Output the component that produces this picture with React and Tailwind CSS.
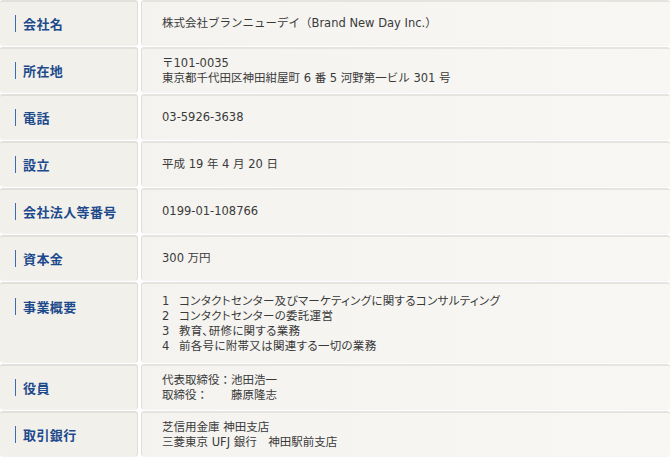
const rows = [
  { label: "会社名", lines: ["株式会社ブランニューデイ（Brand New Day Inc.）"] },
  { label: "所在地", lines: ["〒101-0035", "東京都千代田区神田紺屋町 6 番 5 河野第一ビル 301 号"] },
  { label: "電話", lines: ["03-5926-3638"] },
  { label: "設立", lines: ["平成 19 年 4 月 20 日"] },
  { label: "会社法人等番号", lines: ["0199-01-108766"] },
  { label: "資本金", lines: ["300 万円"] },
  { label: "事業概要", list: [
    "コンタクトセンター及びマーケティングに関するコンサルティング",
    "コンタクトセンターの委託運営",
    "教育､研修に関する業務",
    "前各号に附帯又は関連する一切の業務",
  ] },
  { label: "役員", officers: [["代表取締役：", "池田浩一"], ["取締役：", "藤原隆志"]] },
  { label: "取引銀行", lines: ["芝信用金庫 神田支店", "三菱東京 UFJ 銀行　神田駅前支店"] },
];

function Value({ row }) {
  if (row.list) {
    return (
      <div className="flex flex-col">
        {row.list.map((t, i) => (
          <div key={i} className="flex">
            <span className="w-[17px]">{i + 1}</span>
            <span className="[font-feature-settings:'palt'] tracking-[0.3px]">{t}</span>
          </div>
        ))}
      </div>
    );
  }
  if (row.officers) {
    return (
      <div className="grid grid-cols-[auto_auto] w-fit whitespace-nowrap">
        {row.officers.map(([a, b]) => (
          <div key={a} className="contents">
            <span>{a}</span>
            <span>{b}</span>
          </div>
        ))}
      </div>
    );
  }
  return (
    <div className="flex flex-col">
      {row.lines.map((l) => <span key={l}>{l}</span>)}
    </div>
  );
}

export default function App() {
  return (
    <div className="w-[672px] h-[458px] bg-white pr-[2px]" style={{ fontFamily: '"DejaVu Sans", "Noto Sans CJK JP", sans-serif' }}>
      <div className="flex flex-col gap-[2px]">
        {rows.map((row) => {
          const tall = !!row.list;
          return (
            <div key={row.label} className={`flex gap-[3px] ${tall ? "h-[80px]" : "h-[45px]"}`}>
              <div className={`w-[138px] shrink-0 flex ${tall ? "items-start pt-[14px]" : "items-center"} bg-[#f2f0eb] border-t-2 border-[#e2e0da] border-r border-r-[#dedcd6] rounded-[3px] shadow-[0_1px_1px_rgba(0,0,0,0.06)]`}>
                <span className="ml-[15px] w-px h-[17px] bg-[#3c6cb0]" />
                <span className="ml-[7px] text-[13px] leading-[17px] font-bold text-[#1d4a8c] tracking-[0.03em]" style={{ fontFamily: '"Noto Sans CJK JP", sans-serif' }}>{row.label}</span>
              </div>
              <div className={`flex-1 flex ${tall ? "items-start pt-[10px]" : "items-center"} pl-[20px] bg-gradient-to-r from-[#f4f3ef] to-[#f8f7f4] border-t-2 border-[#e6e4de] border-l border-l-[#e0ded8] rounded-[3px] shadow-[0_1px_1px_rgba(0,0,0,0.05)] text-[11.5px] leading-[15px] text-[#3a3a3a]`}>
                <Value row={row} />
              </div>
            </div>
          );
        })}
      </div>
    </div>
  );
}
